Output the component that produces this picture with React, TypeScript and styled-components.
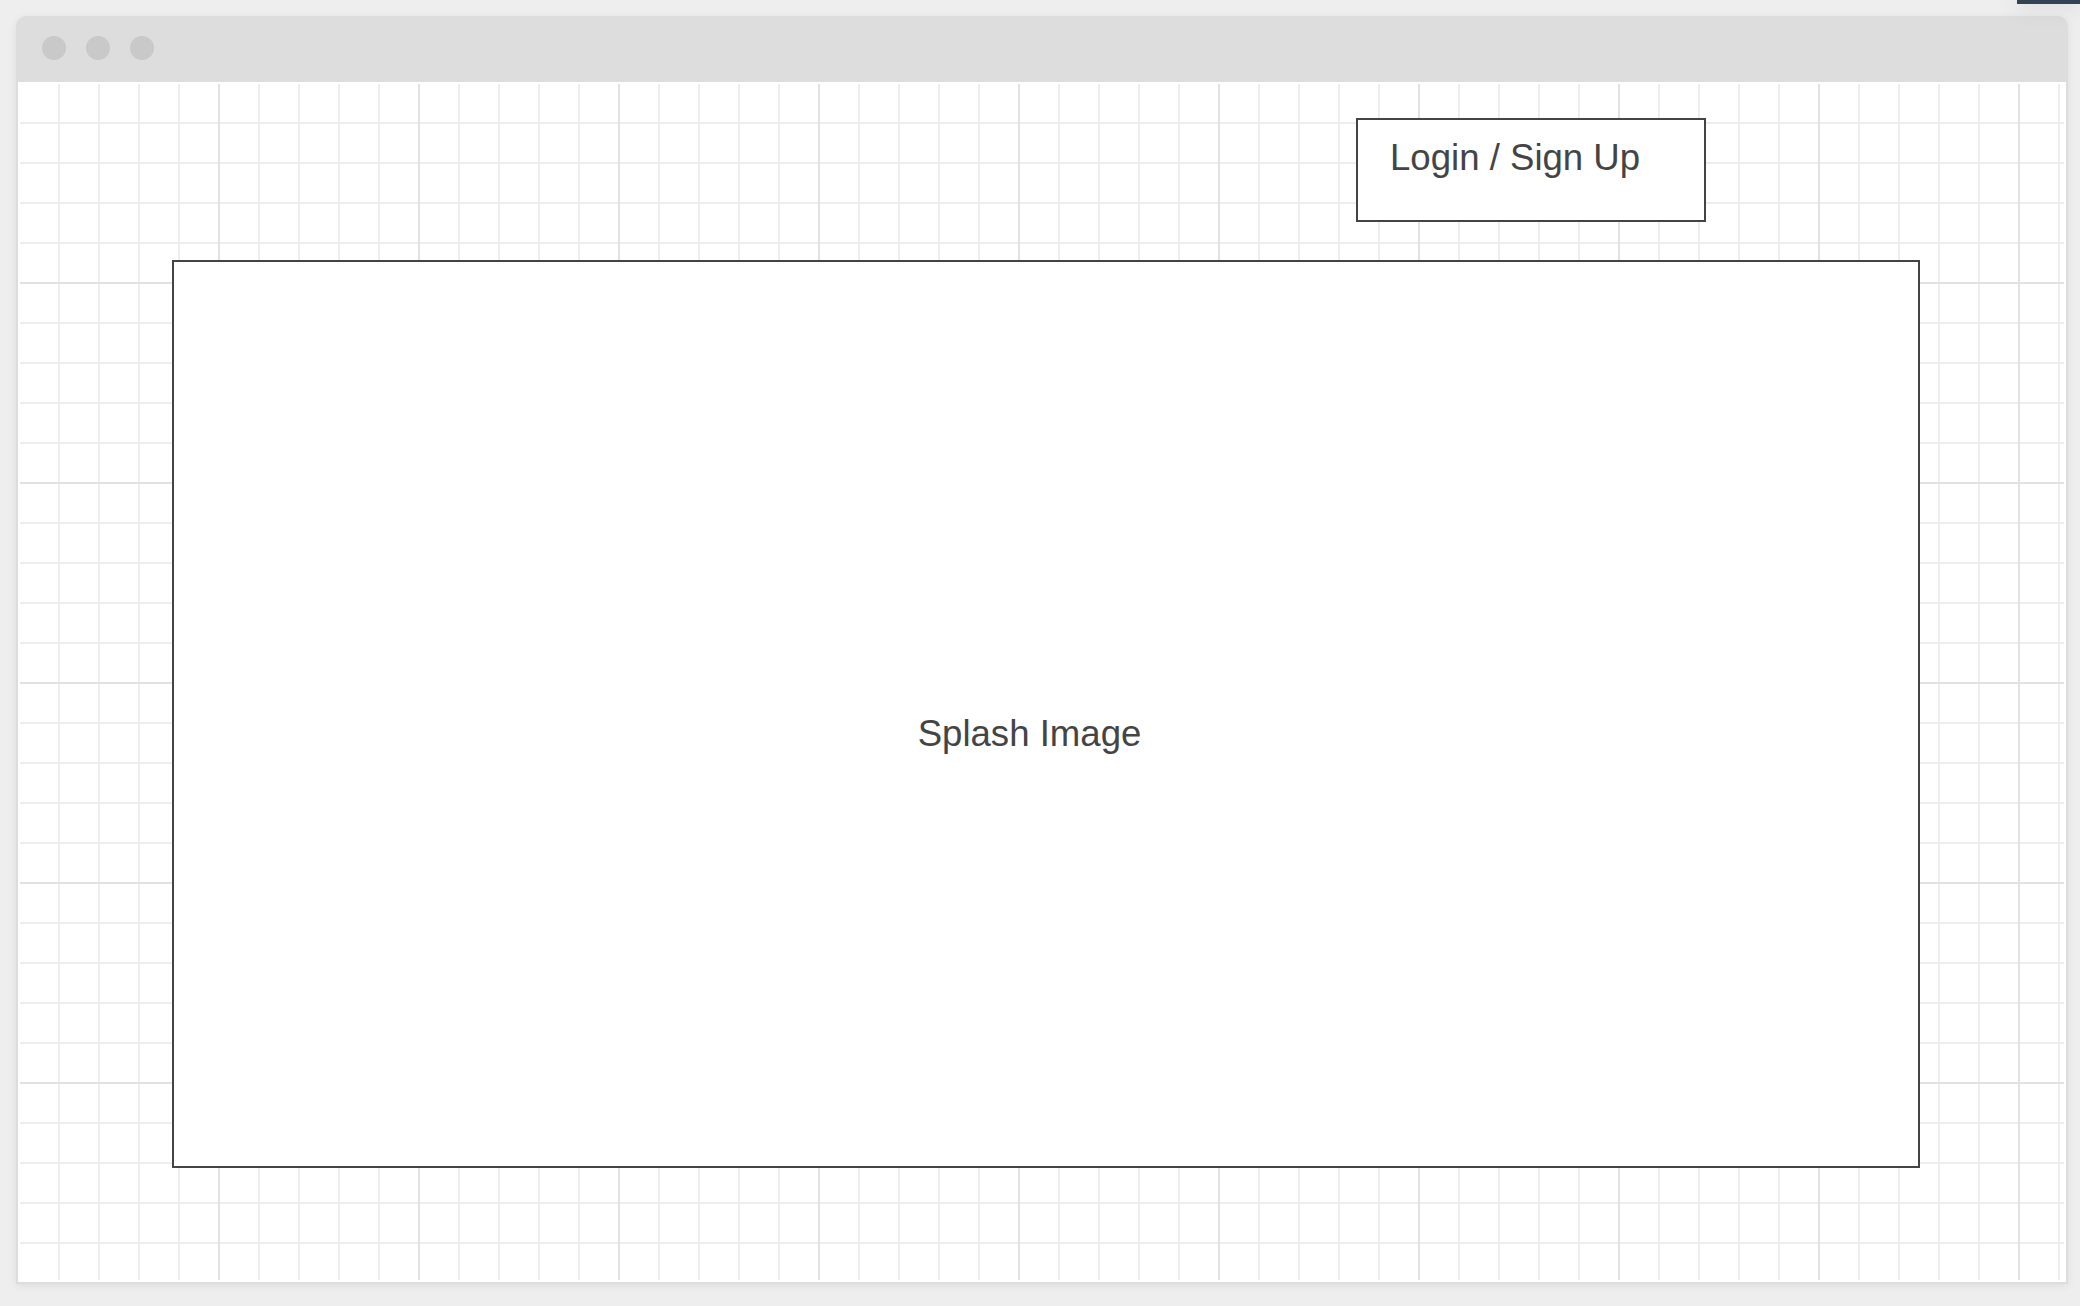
import React from 'react'
import styled, { createGlobalStyle } from 'styled-components'

const GlobalStyle = createGlobalStyle`
  html, body {
    margin: 0;
    padding: 0;
    background: #eeeeee;
    font-family: "Liberation Sans", Arial, sans-serif;
  }
`

const Page = styled.div`
  position: relative;
  box-sizing: border-box;
  width: 2080px;
  height: 1306px;
  padding: 16px 12px 22px 16px;
  background: #eeeeee;
  overflow: hidden;
`

const CornerTab = styled.div`
  position: absolute;
  top: 0;
  right: 0;
  width: 63px;
  height: 4px;
  background: #324250;
  box-shadow: 0 0 22px rgba(0, 0, 0, 0.28);
`

const Window = styled.div`
  display: flex;
  flex-direction: column;
  height: 100%;
  border-radius: 10px 10px 0 0;
  box-shadow: 0 2px 8px rgba(0, 0, 0, 0.07);
`

const TitleBar = styled.div`
  display: flex;
  align-items: center;
  gap: 20px;
  height: 66px;
  flex-shrink: 0;
  padding: 0 0 2px 26px;
  box-sizing: border-box;
  background: #dddddd;
  border-radius: 10px 10px 0 0;
`

const Dot = styled.span`
  width: 24px;
  height: 24px;
  border-radius: 50%;
  background: #c9c9c9;
`

const Canvas = styled.div`
  flex: 1;
  display: flex;
  flex-direction: column;
  padding: 36px 146px 0 154px;
  background-color: #ffffff;
  border: 2px solid #dddddd;
  border-top: none;
  background-image:
    linear-gradient(to right, transparent 198px, #e2e2e2 198px),
    linear-gradient(to bottom, transparent 198px, #e2e2e2 198px),
    linear-gradient(to right, transparent 38px, #eeeeee 38px),
    linear-gradient(to bottom, transparent 38px, #eeeeee 38px);
  background-size: 200px 200px, 200px 200px, 40px 40px, 40px 40px;
  background-position: 2px 2px;
  box-shadow: inset 0 0 0 2px #ffffff;
`

const Header = styled.div`
  display: flex;
  justify-content: flex-end;
  padding-right: 214px;
`

const LoginBox = styled.div`
  box-sizing: border-box;
  width: 350px;
  height: 104px;
  padding: 17px 32px 0;
  background: #ffffff;
  border: 2px solid #444444;
  color: #444444;
  font-size: 36.6px;
`

const Splash = styled.div`
  box-sizing: border-box;
  display: flex;
  align-items: center;
  justify-content: center;
  height: 908px;
  margin-top: 38px;
  padding: 40px 33px 0 0;
  background: #ffffff;
  border: 2px solid #444444;
  color: #444444;
  font-size: 36.6px;
`

export default function App() {
  return (
    <>
      <GlobalStyle />
      <Page>
        <Window>
          <TitleBar>
            <Dot />
            <Dot />
            <Dot />
          </TitleBar>
          <Canvas>
            <Header>
              <LoginBox>Login / Sign Up</LoginBox>
            </Header>
            <Splash>Splash Image</Splash>
          </Canvas>
        </Window>
        <CornerTab />
      </Page>
    </>
  )
}
